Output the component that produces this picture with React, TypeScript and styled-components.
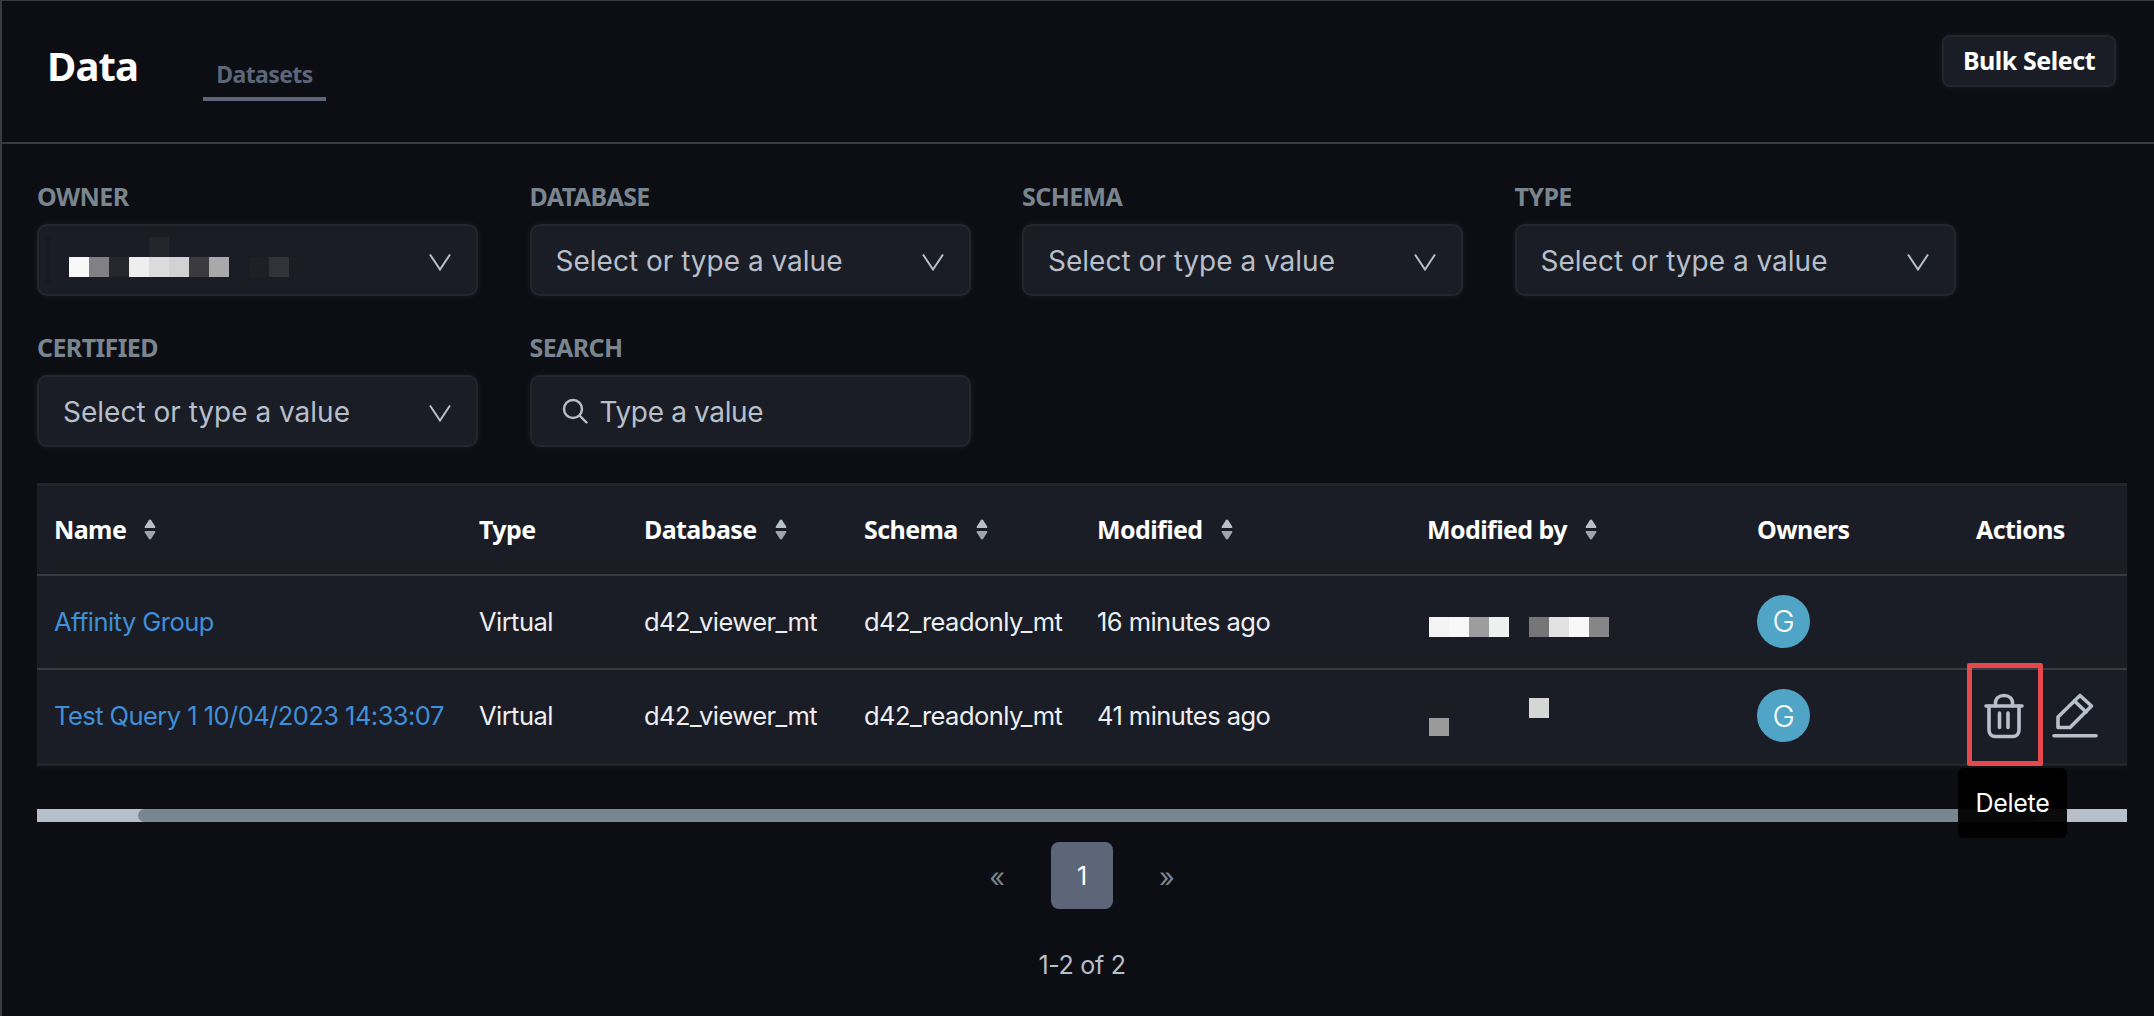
import { ReactElement } from 'react'

import styled, { createGlobalStyle, css } from 'styled-components'

const GlobalStyle = createGlobalStyle`
  html, body {
    margin: 0;
    padding: 0;
    height: 100%;
    background: #0d0e13;
  }
  * { box-sizing: border-box; }
`

const headFont = `"Noto Sans", "Open Sans", sans-serif`
const bodyFont = `Inter, "Noto Sans", sans-serif`

const Page = styled.div`
  width: 2154px;
  height: 1016px;
  overflow: hidden;
  background: #0d0e13;
  border-top: 1px solid #3a3b40;
  border-left: 2px solid #3a3b40;
  font-family: ${bodyFont};
`

const Header = styled.header`
  height: 143px;
  display: flex;
  align-items: flex-start;
  padding-left: 45px;
  border-bottom: 2px solid #3a3b40;
  position: relative;
`

const Title = styled.h1`
  margin: 37px 0 0;
  font-family: ${headFont};
  font-size: 40px;
  line-height: 56px;
  font-weight: 700;
  letter-spacing: -0.9px;
  color: #fff;
`

const Tab = styled.div`
  margin: 52px 0 0 65px;
  width: 123px;
  height: 48px;
  border-bottom: 4px solid #5c6678;
  text-align: center;
  font-family: ${headFont};
  font-size: 23px;
  line-height: 43px;
  font-weight: 700;
  letter-spacing: -0.6px;
  color: #5c6678;
`

const BulkButton = styled.button`
  margin: 34px 38px 0 auto;
  width: 174px;
  height: 52px;
  background: #1a1d25;
  border: 2px solid #23262c;
  border-radius: 8px;
  box-shadow: 0 0 6px rgba(255, 255, 255, 0.07);
  color: #fff;
  font-family: ${headFont};
  font-size: 25px;
  font-weight: 700;
  letter-spacing: -0.45px;
  padding: 0 0 3px;
`

const Filters = styled.section`
  display: grid;
  grid-template-columns: repeat(4, 441px);
  column-gap: 51.5px;
  row-gap: 35px;
  padding: 36px 0 0 35px;
`

const Filter = styled.div`
  display: flex;
  flex-direction: column;
  gap: 12px;
`

const FilterLabel = styled.label`
  height: 32px;
  font-family: ${headFont};
  font-size: 25px;
  line-height: 32px;
  font-weight: 700;
  letter-spacing: -0.6px;
  color: #79858f;
`

const FilterBox = styled.div<{ $search?: boolean }>`
  height: 72px;
  display: flex;
  align-items: center;
  position: relative;
  gap: ${(p) => (p.$search ? '12px' : '14px')};
  padding: 0 24px 0 ${(p) => (p.$search ? '30px' : '24px')};
  background: #1a1d25;
  border: 2px solid #23262c;
  border-radius: 10px;
  box-shadow: 0 0 6px rgba(255, 255, 255, 0.07);
  font-size: 28px;
  letter-spacing: ${(p) => (p.$search ? '-0.35px' : '0')};
  color: #b7bfcb;
`

const FilterValue = styled.span`
  flex: 1;
  padding-top: 2px;
`

const Chevron = styled.svg`
  width: 24px;
  height: 18px;
  flex: none;
  margin-top: 4px;
`

const Mosaic = styled.svg`
  display: block;
  flex: 1;
  height: 50px;
  overflow: visible;
`

const columns = css`
  display: grid;
  grid-template-columns: 425px 165px 220px 233px 330px 330px 219px 168px;
  padding: 0;
`

const Table = styled.section`
  margin: 36px 0 0 35px;
  width: 2090px;
  background: #1a1d25;
  border-top: 3px solid #22252b;
  border-bottom: 3px solid #22252b;
  box-shadow: 0 2px 6px rgba(255, 255, 255, 0.03);
`

const HeadRow = styled.div`
  ${columns}
  height: 90px;
  border-bottom: 2px solid #3a3b40;
  align-items: center;
`

const HeadCell = styled.div`
  display: flex;
  align-items: center;
  gap: 18px;
  padding: 0 0 2px 17px;
  font-family: ${headFont};
  font-size: 25px;
  font-weight: 700;
  letter-spacing: -0.6px;
  color: #fff;
`

const BodyRow = styled.div<{ $last?: boolean }>`
  ${columns}
  height: ${(p) => (p.$last ? '93px' : '94px')};
  align-items: center;
  border-bottom: ${(p) => (p.$last ? 'none' : '2px solid #3a3b40')};
`

const BodyCell = styled.div`
  padding: 0 0 2px 17px;
  font-size: 25.5px;
  letter-spacing: -0.55px;
  color: #eceef1;
  white-space: nowrap;
  position: relative;
`

const NameLink = styled.a`
  color: #3f90d8;
  text-decoration: none;
`

const Avatar = styled.div`
  width: 53px;
  height: 53px;
  border-radius: 50%;
  background: #50a5c6;
  color: #fff;
  display: flex;
  align-items: center;
  justify-content: center;
  font-size: 30px;
  font-weight: 300;
`

const Redacted = styled.svg`
  display: block;
  width: 180px;
  height: 40px;
  margin-left: 2px;
`

const Actions = styled.div`
  display: flex;
  align-items: center;
  height: 45px;
  margin-left: 8px;
  gap: 28px;
`

const ActionIcon = styled.svg`
  flex: none;
  display: block;
  height: 46px;
  fill: none;
  stroke: #b7bfcb;
  stroke-width: 3.6;
  stroke-linecap: round;
  stroke-linejoin: round;
`

const TrashButton = styled.div`
  position: relative;
  width: 40px;
  height: 46px;
`

const Highlight = styled.div`
  position: absolute;
  left: -17px;
  top: -30px;
  width: 76px;
  height: 103px;
  border: 5px solid #e5484d;
  border-radius: 2px;
`

const Tooltip = styled.div`
  position: absolute;
  z-index: 5;
  left: -26px;
  top: 75px;
  width: 109px;
  height: 70px;
  display: flex;
  align-items: center;
  justify-content: center;
  background: rgba(0, 0, 0, 0.94);
  border-radius: 6px;
  color: #fff;
  font-size: 25px;
  letter-spacing: -0.3px;
`

const ScrollTrack = styled.div`
  margin: 43px 0 0 35px;
  width: 2090px;
  height: 13px;
  background: #b7bfcb;
`

const ScrollThumb = styled.div`
  margin-left: 101px;
  width: 1902px;
  height: 13px;
  background: #79858f;
  border-radius: 7px;
`

const Pagination = styled.nav`
  margin-top: 20px;
  display: flex;
  justify-content: center;
  align-items: center;
  gap: 46px;
  padding-left: 8px;
  height: 67px;
`

const PageArrow = styled.span`
  color: #79858f;
  font-size: 27px;
  margin-top: 4px;
`

const PageButton = styled.div`
  width: 62px;
  height: 67px;
  display: flex;
  align-items: center;
  justify-content: center;
  background: #5c6678;
  border-radius: 8px;
  color: #fff;
  font-size: 25px;
`

const Count = styled.div`
  margin-top: 36px;
  padding-left: 8px;
  line-height: 40px;
  text-align: center;
  font-size: 25px;
  letter-spacing: -0.3px;
  color: #b7bfcb;
`

const ChevronIcon = (): ReactElement => (
  <Chevron viewBox="0 0 24 18" fill="none">
    <path d="M2 1.5 12 16.5 22 1.5" stroke="#b7bfcb" strokeWidth="2" />
  </Chevron>
)

const SortIcon = (): ReactElement => (
  <svg width="12" height="21" viewBox="0 0 12 21">
    <path d="M6 .5c.5 0 .9.3 1.2.7l4 6.3c.5.8 0 1.5-.8 1.5H1.600C.8 9 .3 8.300.8 7.500l4-6.300C5.100.8 5.500.5 6 .5Z" fill="#b7bfcb" />
    <path d="M6 20.500c.5 0 .9-.3 1.200-.7l4-6.300c.5-.8 0-1.500-.8-1.500H1.600c-.8 0-1.300.7-.8 1.500l4 6.300c.3.4.7.7 1.200.7Z" fill="#9ca4b0" />
  </svg>
)

const SearchIcon = (): ReactElement => (
  <svg width="26" height="26" viewBox="0 0 26 26" fill="none" stroke="#b7bfcb" strokeWidth="2.4" strokeLinecap="round">
    <circle cx="11" cy="11" r="9" />
    <path d="M18 18 24.500 24.500" />
  </svg>
)

const TrashIcon = (): ReactElement => (
  <ActionIcon viewBox="0 0 40 46" width="40">
    <path d="M2 13H38" />
    <path d="M11.500 13V10C11.500 5.500 15 2.500 20 2.500S28.500 5.500 28.500 10V13" />
    <path d="M5 13V37C5 41 7.500 43.500 11.500 43.500H28.500C32.500 43.500 35 41 35 37V13" />
    <path d="M15.500 20V34.500" />
    <path d="M24 20V34.500" />
  </ActionIcon>
)

const EditIcon = (): ReactElement => (
  <ActionIcon viewBox="0 0 46 46" width="46">
    <path d="M6 24 28 2.500 39.500 13 18 34.500H6Z" />
    <path d="M22.500 8 34 19" />
    <path d="M2 42.800H44" />
  </ActionIcon>
)

const ownerBlocks: [number, number, string][] = [
  [6, 22, '#f8f8f8'],
  [26, 22, '#808085'],
  [46, 22, '#25272d'],
  [66, 22, '#eeeeee'],
  [86, 22, '#dcdcdc'],
  [106, 22, '#d2d2d4'],
  [126, 22, '#3a3a3f'],
  [146, 22, '#a9a9ab'],
  [186, 22, '#1f2025'],
  [206, 22, '#323338'],
  [86, 2, '#24262b'],
]

const OwnerValue = (): ReactElement => (
  <Mosaic viewBox="0 0 300 50" preserveAspectRatio="xMinYMid meet">
    <rect x="-17" y="0" width="4" height="50" fill="#181a21" />
    {ownerBlocks.map(([x, y, fill]) => (
      <rect key={`${x}-${y}`} x={x} y={y} width="20" height="20" fill={fill} />
    ))}
  </Mosaic>
)

const modifiedOne = ['#f4f4f4', '#f8f8f8', '#9d9d9f', '#eef0ef', '', '#767679', '#e2e2e2', '#f8f8f8', '#868689']

const filters = [
  { label: 'DATABASE', value: 'Select or type a value' },
  { label: 'SCHEMA', value: 'Select or type a value' },
  { label: 'TYPE', value: 'Select or type a value' },
  { label: 'CERTIFIED', value: 'Select or type a value' },
]

const heads = [
  { label: 'Name', sort: true },
  { label: 'Type' },
  { label: 'Database', sort: true },
  { label: 'Schema', sort: true },
  { label: 'Modified', sort: true },
  { label: 'Modified by', sort: true },
  { label: 'Owners' },
  { label: 'Actions' },
]

const App = (): ReactElement => {
  return (
    <Page>
      <GlobalStyle />
      <Header>
        <Title>Data</Title>
        <Tab>Datasets</Tab>
        <BulkButton>Bulk Select</BulkButton>
      </Header>
      <Filters>
        <Filter>
          <FilterLabel>OWNER</FilterLabel>
          <FilterBox>
            <OwnerValue />
            <ChevronIcon />
          </FilterBox>
        </Filter>
        {filters.map((f) => (
          <Filter key={f.label}>
            <FilterLabel>{f.label}</FilterLabel>
            <FilterBox>
              <FilterValue>{f.value}</FilterValue>
              <ChevronIcon />
            </FilterBox>
          </Filter>
        ))}
        <Filter>
          <FilterLabel>SEARCH</FilterLabel>
          <FilterBox $search>
            <SearchIcon />
            <FilterValue>Type a value</FilterValue>
          </FilterBox>
        </Filter>
      </Filters>
      <Table>
        <HeadRow>
          {heads.map((h) => (
            <HeadCell key={h.label}>
              {h.label}
              {h.sort && <SortIcon />}
            </HeadCell>
          ))}
        </HeadRow>
        <BodyRow>
          <BodyCell>
            <NameLink>Affinity Group</NameLink>
          </BodyCell>
          <BodyCell>Virtual</BodyCell>
          <BodyCell>d42_viewer_mt</BodyCell>
          <BodyCell>d42_readonly_mt</BodyCell>
          <BodyCell>16 minutes ago</BodyCell>
          <BodyCell>
            <Redacted viewBox="0 0 180 40">
              {modifiedOne.map((fill, i) =>
                fill ? <rect key={i} x={i * 20} y="16" width="20" height="20" fill={fill} /> : null,
              )}
            </Redacted>
          </BodyCell>
          <BodyCell>
            <Avatar>G</Avatar>
          </BodyCell>
          <BodyCell />
        </BodyRow>
        <BodyRow $last>
          <BodyCell>
            <NameLink>Test Query 1 10/04/2023 14:33:07</NameLink>
          </BodyCell>
          <BodyCell>Virtual</BodyCell>
          <BodyCell>d42_viewer_mt</BodyCell>
          <BodyCell>d42_readonly_mt</BodyCell>
          <BodyCell>41 minutes ago</BodyCell>
          <BodyCell>
            <Redacted viewBox="0 0 180 40">
              <rect x="0" y="22" width="20" height="20" fill="#9a9a9c" />
              <rect x="100" y="2" width="20" height="20" fill="#d6d6d6" />
            </Redacted>
          </BodyCell>
          <BodyCell>
            <Avatar>G</Avatar>
          </BodyCell>
          <BodyCell>
            <Actions>
              <TrashButton>
                <TrashIcon />
                <Highlight />
                <Tooltip>Delete</Tooltip>
              </TrashButton>
              <EditIcon />
            </Actions>
          </BodyCell>
        </BodyRow>
      </Table>
      <ScrollTrack>
        <ScrollThumb />
      </ScrollTrack>
      <Pagination>
        <PageArrow>«</PageArrow>
        <PageButton>1</PageButton>
        <PageArrow>»</PageArrow>
      </Pagination>
      <Count>1-2 of 2</Count>
    </Page>
  )
}

export default App
